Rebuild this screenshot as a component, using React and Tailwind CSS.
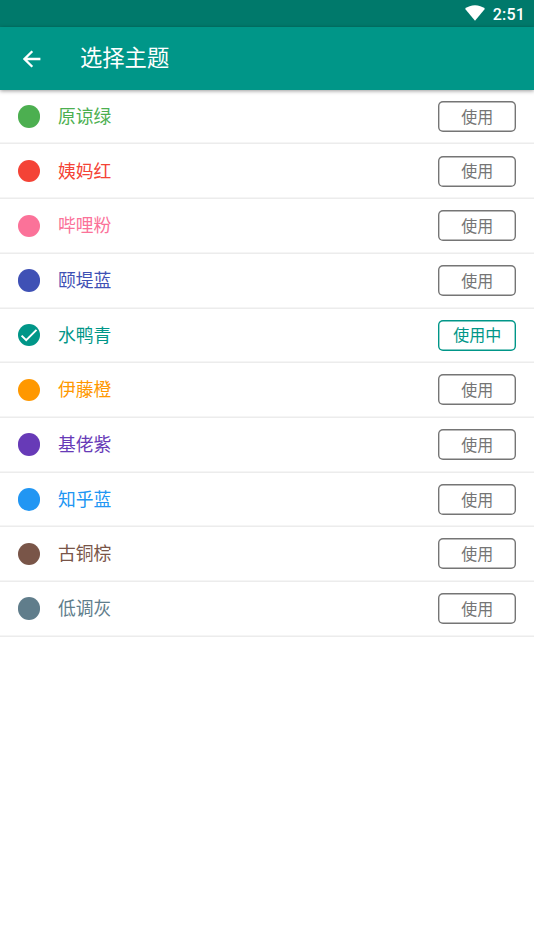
import clsx from "clsx";

const themes = [
  { name: "原谅绿", dot: "bg-[#4caf50]", text: "text-[#4caf50]" },
  { name: "姨妈红", dot: "bg-[#f44336]", text: "text-[#f44336]" },
  { name: "哔哩粉", dot: "bg-[#fb7299]", text: "text-[#fb7299]" },
  { name: "颐堤蓝", dot: "bg-[#3f51b5]", text: "text-[#3f51b5]" },
  { name: "水鸭青", dot: "bg-[#009688]", text: "text-[#009688]", active: true },
  { name: "伊藤橙", dot: "bg-[#ff9800]", text: "text-[#ff9800]" },
  { name: "基佬紫", dot: "bg-[#673ab7]", text: "text-[#673ab7]" },
  { name: "知乎蓝", dot: "bg-[#2196f3]", text: "text-[#2196f3]" },
  { name: "古铜棕", dot: "bg-[#795548]", text: "text-[#795548]" },
  { name: "低调灰", dot: "bg-[#607d8b]", text: "text-[#607d8b]" },
];

const StatusBar = () => (
  <div className="flex h-[27px] items-center justify-end bg-[#00796b] pt-px pr-[9px] text-white">
    <svg className="mr-2 mb-[2px] h-4 w-5" viewBox="0 0 20 16" fill="currentColor" aria-hidden="true">
      <path d="M0 3.8C2.8 1.5 6.2.3 10 .3s7.2 1.2 10 3.5L10 15.7z" />
    </svg>
    <span className="pt-px font-['Roboto',sans-serif] text-base leading-none font-medium tracking-[0.2px]">
      2:51
    </span>
  </div>
);

const AppBar = () => (
  <header className="relative flex h-[62.8px] items-center bg-[#009688] pl-[23px] text-white shadow-[0_1px_4px_rgba(0,0,0,0.4)]">
    <button type="button" aria-label="返回" className="pt-px">
      <svg className="block size-[18px]" viewBox="0 0 18 18" fill="none" stroke="currentColor" strokeWidth="2.3">
        <path d="M17.4 9H2M9.3 1.2 1.5 9l7.8 7.8" />
      </svg>
    </button>
    <h1 className="ml-[39px] pb-[4px] text-[22.3px] leading-none">选择主题</h1>
  </header>
);

const ThemeRow = ({ theme }) => (
  <li className="flex h-[54.7px] items-center px-[18px] pb-[1.3px] shadow-[inset_0_-1.4px_0_#ececec]">
    <span className={clsx("flex size-[22.4px] items-center justify-center rounded-full", theme.dot)}>
      {theme.active && (
        <svg className="size-[22px]" viewBox="0 0 22 22" fill="none" stroke="#fff" strokeWidth="2" aria-hidden="true">
          <path d="M3.6 11.6 8.2 16.2 18.5 5.9" />
        </svg>
      )}
    </span>
    <span className={clsx("ml-[17.6px] pb-[1.4px] text-[17.8px] leading-none", theme.text)}>
      {theme.name}
    </span>
    <button
      type="button"
      className={clsx(
        "ml-auto flex h-[31px] w-[78px] items-center justify-center rounded-[5px] pb-[1.6px] pl-[0.5px] text-base leading-none",
        theme.active
          ? "text-[#009688] shadow-[inset_0_0_0_1.4px_#009688]"
          : "text-[#757575] shadow-[inset_0_0_0_1.4px_#757575]"
      )}
    >
      {theme.active ? "使用中" : "使用"}
    </button>
  </li>
);

export default function App() {
  return (
    <div className="min-h-screen bg-white font-['Noto_Sans_CJK_SC',sans-serif]">
      <StatusBar />
      <AppBar />
      <ul>
        {themes.map((theme) => (
          <ThemeRow key={theme.name} theme={theme} />
        ))}
      </ul>
    </div>
  );
}
